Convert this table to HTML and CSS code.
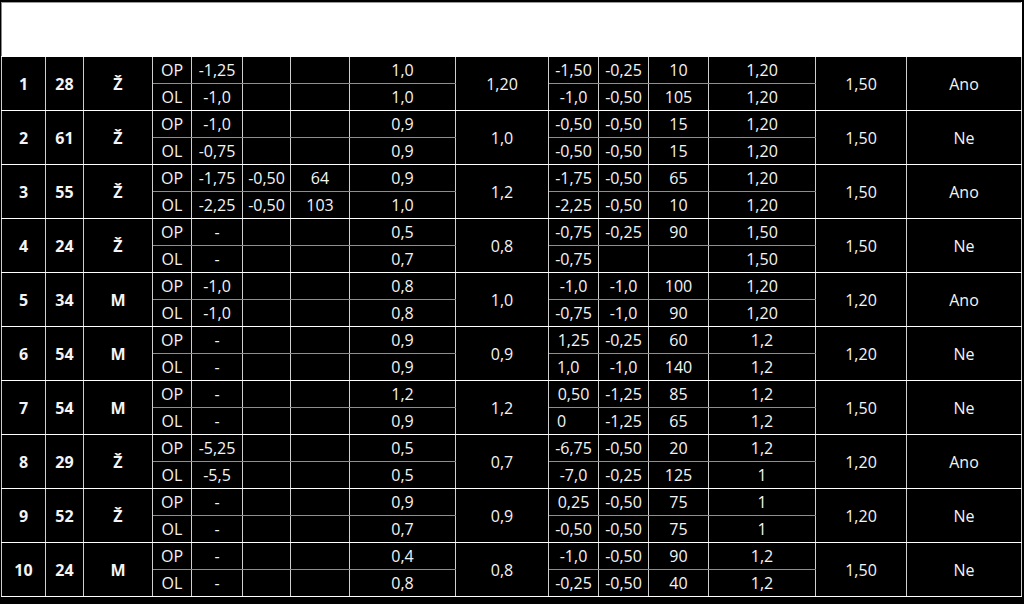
FILE: index.html
```html
<!DOCTYPE html>
<html lang="cs">
<head>
<meta charset="utf-8">
<title>Tabulka</title>
<link rel="stylesheet" href="styles.css">
</head>
<body>
<div class="wrap">
<table class="data">
<colgroup>
<col class="c1"><col class="c2"><col class="c3"><col class="c4"><col class="c5"><col class="c6"><col class="c7"><col class="c8"><col class="c9"><col class="c10"><col class="c11"><col class="c12"><col class="c13"><col class="c14"><col class="c15">
</colgroup>
<tbody>
<tr class="head"><td colspan="15"></td></tr>

<tr class="op"><td class="g b" rowspan="2">1</td><td class="g b" rowspan="2">28</td><td class="g b" rowspan="2">Ž</td><td>OP</td><td>-1,25</td><td></td><td></td><td>1,0</td><td class="g" rowspan="2">1,20</td><td>-1,50</td><td>-0,25</td><td>10</td><td>1,20</td><td class="g" rowspan="2">1,50</td><td class="g" rowspan="2">Ano</td></tr>
<tr class="ol"><td>OL</td><td>-1,0</td><td></td><td></td><td>1,0</td><td>-1,0</td><td>-0,50</td><td>105</td><td>1,20</td></tr>

<tr class="op"><td class="g b" rowspan="2">2</td><td class="g b" rowspan="2">61</td><td class="g b" rowspan="2">Ž</td><td>OP</td><td>-1,0</td><td></td><td></td><td>0,9</td><td class="g" rowspan="2">1,0</td><td>-0,50</td><td>-0,50</td><td>15</td><td>1,20</td><td class="g" rowspan="2">1,50</td><td class="g" rowspan="2">Ne</td></tr>
<tr class="ol"><td>OL</td><td>-0,75</td><td></td><td></td><td>0,9</td><td>-0,50</td><td>-0,50</td><td>15</td><td>1,20</td></tr>

<tr class="op"><td class="g b" rowspan="2">3</td><td class="g b" rowspan="2">55</td><td class="g b" rowspan="2">Ž</td><td>OP</td><td>-1,75</td><td>-0,50</td><td>64</td><td>0,9</td><td class="g" rowspan="2">1,2</td><td>-1,75</td><td>-0,50</td><td>65</td><td>1,20</td><td class="g" rowspan="2">1,50</td><td class="g" rowspan="2">Ano</td></tr>
<tr class="ol"><td>OL</td><td>-2,25</td><td>-0,50</td><td>103</td><td>1,0</td><td>-2,25</td><td>-0,50</td><td>10</td><td>1,20</td></tr>

<tr class="op"><td class="g b" rowspan="2">4</td><td class="g b" rowspan="2">24</td><td class="g b" rowspan="2">Ž</td><td>OP</td><td>-</td><td></td><td></td><td>0,5</td><td class="g" rowspan="2">0,8</td><td>-0,75</td><td>-0,25</td><td>90</td><td>1,50</td><td class="g" rowspan="2">1,50</td><td class="g" rowspan="2">Ne</td></tr>
<tr class="ol"><td>OL</td><td>-</td><td></td><td></td><td>0,7</td><td>-0,75</td><td></td><td></td><td>1,50</td></tr>

<tr class="op"><td class="g b" rowspan="2">5</td><td class="g b" rowspan="2">34</td><td class="g b" rowspan="2">M</td><td>OP</td><td>-1,0</td><td></td><td></td><td>0,8</td><td class="g" rowspan="2">1,0</td><td>-1,0</td><td>-1,0</td><td>100</td><td>1,20</td><td class="g" rowspan="2">1,20</td><td class="g" rowspan="2">Ano</td></tr>
<tr class="ol"><td>OL</td><td>-1,0</td><td></td><td></td><td>0,8</td><td>-0,75</td><td>-1,0</td><td>90</td><td>1,20</td></tr>

<tr class="op"><td class="g b" rowspan="2">6</td><td class="g b" rowspan="2">54</td><td class="g b" rowspan="2">M</td><td>OP</td><td>-</td><td></td><td></td><td>0,9</td><td class="g" rowspan="2">0,9</td><td>1,25</td><td>-0,25</td><td>60</td><td>1,2</td><td class="g" rowspan="2">1,20</td><td class="g" rowspan="2">Ne</td></tr>
<tr class="ol"><td>OL</td><td>-</td><td></td><td></td><td>0,9</td><td class="l">1,0</td><td>-1,0</td><td>140</td><td>1,2</td></tr>

<tr class="op"><td class="g b" rowspan="2">7</td><td class="g b" rowspan="2">54</td><td class="g b" rowspan="2">M</td><td>OP</td><td>-</td><td></td><td></td><td>1,2</td><td class="g" rowspan="2">1,2</td><td>0,50</td><td>-1,25</td><td>85</td><td>1,2</td><td class="g" rowspan="2">1,50</td><td class="g" rowspan="2">Ne</td></tr>
<tr class="ol"><td>OL</td><td>-</td><td></td><td></td><td>0,9</td><td class="l">0</td><td>-1,25</td><td>65</td><td>1,2</td></tr>

<tr class="op"><td class="g b" rowspan="2">8</td><td class="g b" rowspan="2">29</td><td class="g b" rowspan="2">Ž</td><td>OP</td><td>-5,25</td><td></td><td></td><td>0,5</td><td class="g" rowspan="2">0,7</td><td>-6,75</td><td>-0,50</td><td>20</td><td>1,2</td><td class="g" rowspan="2">1,20</td><td class="g" rowspan="2">Ano</td></tr>
<tr class="ol"><td>OL</td><td>-5,5</td><td></td><td></td><td>0,5</td><td>-7,0</td><td>-0,25</td><td>125</td><td>1</td></tr>

<tr class="op"><td class="g b" rowspan="2">9</td><td class="g b" rowspan="2">52</td><td class="g b" rowspan="2">Ž</td><td>OP</td><td>-</td><td></td><td></td><td>0,9</td><td class="g" rowspan="2">0,9</td><td>0,25</td><td>-0,50</td><td>75</td><td>1</td><td class="g" rowspan="2">1,20</td><td class="g" rowspan="2">Ne</td></tr>
<tr class="ol"><td>OL</td><td>-</td><td></td><td></td><td>0,7</td><td>-0,50</td><td>-0,50</td><td>75</td><td>1</td></tr>

<tr class="op"><td class="g b" rowspan="2">10</td><td class="g b" rowspan="2">24</td><td class="g b" rowspan="2">M</td><td>OP</td><td>-</td><td></td><td></td><td>0,4</td><td class="g" rowspan="2">0,8</td><td>-1,0</td><td>-0,50</td><td>90</td><td>1,2</td><td class="g" rowspan="2">1,50</td><td class="g" rowspan="2">Ne</td></tr>
<tr class="ol"><td>OL</td><td>-</td><td></td><td></td><td>0,8</td><td>-0,25</td><td>-0,50</td><td>40</td><td>1,2</td></tr>
</tbody>
</table>
</div>
</body>
</html>
```

FILE: styles.css
```css
html, body {
  margin: 0;
  padding: 0;
  background: #000;
}
.wrap {
  padding: 2px 0 0 1px;
}
.data {
  border-collapse: collapse;
  table-layout: fixed;
  width: 1021px;
  font-family: "Open Sans", "Liberation Sans", sans-serif;
  font-size: 16px;
  color: #f4f4f4;
}
.c1 { width: 44px; }
.c2 { width: 38px; }
.c3 { width: 69px; }
.c4 { width: 39px; }
.c5 { width: 51px; }
.c6 { width: 48px; }
.c7 { width: 59px; }
.c8 { width: 106px; }
.c9 { width: 93px; }
.c10 { width: 50px; }
.c11 { width: 50px; }
.c12 { width: 60px; }
.c13 { width: 107px; }
.c14 { width: 91px; }
.c15 { width: 115px; }

.data td {
  border: 1px solid #cfcfcf;
  padding: 0;
  height: 26px;
  text-align: center;
  vertical-align: middle;
  line-height: 18px;
  white-space: nowrap;
  overflow: hidden;
}
.data tr.head td {
  background: #fff;
  height: 53px;
  border-color: #9a9a9a #fff #fff #8a8a8a;
}
.data tr.op td {
  border-top-color: #fff;
  border-bottom-color: #8e8e8e;
}
.data tr.op td.g {
  border-bottom-color: #fff;
}
.data tr.ol td {
  border-top-color: #8e8e8e;
  border-bottom-color: #fff;
}
.data td.b {
  font-weight: bold;
}
.data td.l {
  text-align: left;
  padding-left: 8px;
}
```
